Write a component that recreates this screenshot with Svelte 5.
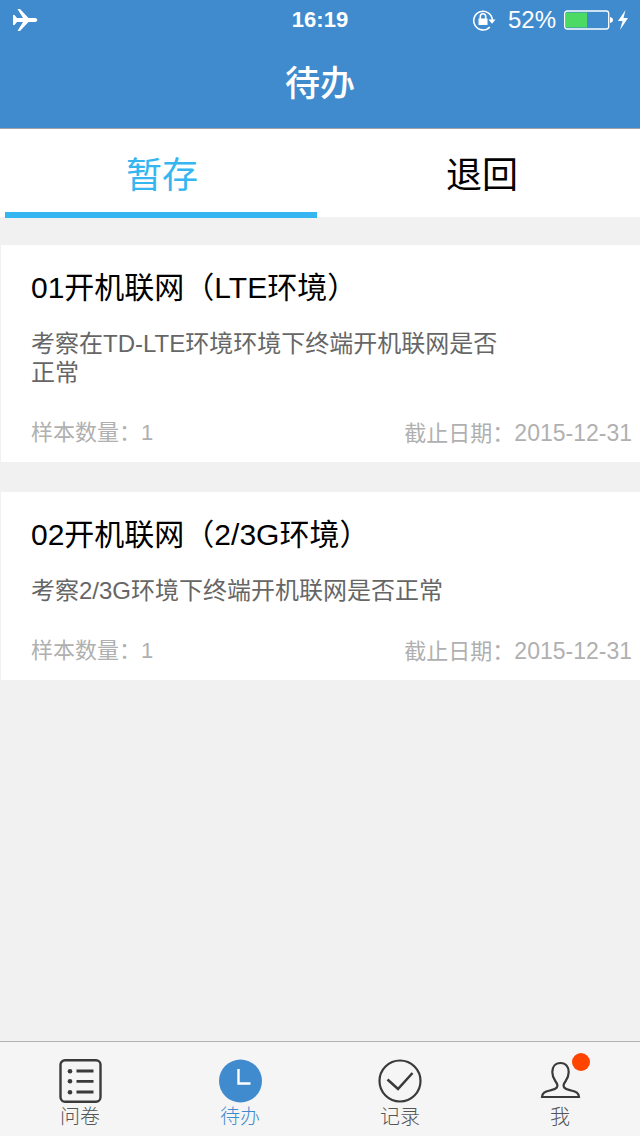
<!-- Todo.svelte -->
<script>
  let activeTab = $state('draft');
  let activePage = $state('todo');

  const tabs = [
    { id: 'draft', label: '暂存' },
    { id: 'returned', label: '退回' }
  ];

  const tasks = [
    {
      title: '01开机联网（LTE环境）',
      description: '考察在TD-LTE环境环境下终端开机联网是否正常',
      samples: 1,
      deadline: '2015-12-31'
    },
    {
      title: '02开机联网（2/3G环境）',
      description: '考察2/3G环境下终端开机联网是否正常',
      samples: 1,
      deadline: '2015-12-31'
    }
  ];

  const pages = [
    { id: 'survey', label: '问卷' },
    { id: 'todo', label: '待办' },
    { id: 'records', label: '记录' },
    { id: 'me', label: '我', badge: true }
  ];

  function openPage(event, id) {
    event.preventDefault();
    activePage = id;
  }
</script>

<div class="app">
  <header class="header">
    <div class="status">
      <div class="status-left">
        <svg width="26" height="24" viewBox="0 0 26 24" aria-hidden="true">
          <path fill="#fff" d="M1 7h1.500l2.500 3H11L5.500 1H8l8.500 9H23c1.500 0 2.300 1 2.300 2s-.8 2-2.300 2h-6.500L8 23H5.500L11 14H5l-2.500 3H1V7z" />
        </svg>
      </div>
      <time class="clock">16:19</time>
      <div class="status-right">
        <svg width="24" height="24" viewBox="0 0 24 24" aria-hidden="true">
          <path fill="none" stroke="#fff" stroke-width="1.600" d="M17.800 19A9.300 9.300 0 1 1 20.300 12" />
          <path fill="#fff" d="M16.500 11.500h7L20 15.800zM6.500 10.500h9V17h-9z" />
          <path fill="none" stroke="#fff" stroke-width="1.600" d="M8.300 11V8.500a2.700 2.700 0 0 1 5.400 0V11" />
        </svg>
        <span class="percent">52%</span>
        <svg width="50" height="20" viewBox="0 0 50 20" aria-hidden="true">
          <rect x="0.700" y="1" width="44" height="18" rx="2.500" fill="none" stroke="#fff" stroke-width="1.300" />
          <rect x="2" y="2.500" width="21" height="15" fill="#4cd964" />
          <path fill="#fff" d="M46 7c4 .5 4 5.500 0 6z" />
        </svg>
        <svg width="12" height="20" viewBox="0 0 12 20" aria-hidden="true">
          <path fill="#fff" d="M8.500 0 1 11h4.500L3 20l8-12H6.500z" />
        </svg>
      </div>
    </div>
    <h1 class="title">待办</h1>
  </header>

  <div class="tabs" role="tablist">
    {#each tabs as tab}
      <button
        class="tab {tab.id === activeTab ? 'active' : ''}"
        role="tab"
        aria-selected={tab.id === activeTab}
        onclick={() => (activeTab = tab.id)}
      >
        {tab.label}
      </button>
    {/each}
  </div>

  <main class="list">
    {#each tasks as task}
      <article class="card">
        <h2 class="card-title">{task.title}</h2>
        <p class="card-text">{task.description}</p>
        <div class="card-meta">
          <span>样本数量：{task.samples}</span>
          <span>截止日期：<time class="date">{task.deadline}</time></span>
        </div>
      </article>
    {/each}
  </main>

  <nav class="tabbar">
    {#each pages as page}
      <a
        class="tabbar-item {page.id === activePage ? 'active' : ''}"
        href="#{page.id}"
        onclick={(event) => openPage(event, page.id)}
      >
        <span class="icon">
          <svg width="44" height="44" viewBox="0 0 44 44" fill="none" stroke="#3a3a3a" stroke-width="2" aria-hidden="true">
            {#if page.id === 'survey'}
              <rect x="2.500" y="1.300" width="40" height="41.500" rx="4.500" stroke-width="2.400" />
              <path d="M18.500 12h17M18.500 22.300h17M18.500 33h17" stroke-width="2.800" />
              <g fill="#3a3a3a" stroke="none">
                <circle cx="12" cy="12.300" r="2.300" />
                <circle cx="12" cy="22.300" r="2.300" />
                <circle cx="12" cy="33.300" r="2.300" />
              </g>
            {:else if page.id === 'todo'}
              <circle cx="22.500" cy="22" r="21.500" fill="#3f8bce" stroke="none" />
              <path d="M20.500 10v14.500h12" stroke="#fff" stroke-width="2.400" />
            {:else if page.id === 'records'}
              <circle cx="22" cy="22" r="20.500" stroke-width="2.200" />
              <path d="M9.500 20.500 20 30 34.500 14" stroke-width="2.600" />
            {:else}
              <path
                d="M22.500 4c-5.500 0-8.200 4-8.200 9 0 4 1.200 6.500 3 9 1.500 2 3 4.500 1.500 6.500-1.500 2-4.300 2.300-7 3-5 1.200-7.500 2.300-7.800 6.500h37c-.3-4.200-2.800-5.300-7.800-6.500-2.700-.7-5.500-1-7-3-1.500-2 0-4.500 1.500-6.500 1.800-2.500 3-5 3-9 0-5-2.700-9-8.200-9z"
                stroke-width="2.200"
              />
            {/if}
          </svg>
          {#if page.badge}
            <span class="badge"></span>
          {/if}
        </span>
        <span class="label">{page.label}</span>
      </a>
    {/each}
  </nav>
</div>

<style>
  :global(body) {
    margin: 0;
    background: #f1f1f1;
  }

  .app {
    display: flex;
    flex-direction: column;
    min-height: 100vh;
    font-family: "Liberation Sans", "Noto Sans CJK SC", sans-serif;
    color: #000;
  }

  .header {
    background: #3f8bce;
    border-bottom: 1px solid #a0a4a8;
    color: #fff;
  }

  .status {
    display: grid;
    grid-template-columns: 1fr auto 1fr;
    align-items: center;
    height: 40px;
    padding: 0 12px;
  }

  .status svg {
    display: block;
  }

  .clock {
    font-size: 22px;
    font-weight: 700;
  }

  .status-right {
    display: flex;
    align-items: center;
    justify-content: flex-end;
    gap: 8px;
  }

  .status-right svg:last-child {
    margin: 0 -1px 0 -5px;
  }

  .percent {
    margin-left: 4px;
    font-size: 24px;
  }

  .title {
    margin: 0;
    font-size: 35px;
    font-weight: 500;
    line-height: 88px;
    text-align: center;
  }

  .tabs {
    display: flex;
    height: 88px;
    background: #fff;
  }

  .tab {
    position: relative;
    flex: 1;
    padding: 0 0 2px 4px;
    border: 0;
    background: none;
    color: #000;
    font: inherit;
    font-size: 36px;
    cursor: pointer;
  }

  .tab.active {
    color: #36b6f0;
  }

  .tab.active::after {
    content: "";
    position: absolute;
    right: 3px;
    bottom: -1px;
    left: 5px;
    height: 6px;
    background: #36b6f0;
  }

  .list {
    display: flex;
    flex: 1;
    flex-direction: column;
    gap: 30px;
    padding: 28px 0 30px 1px;
  }

  .card {
    padding: 23px 8px 15px 30px;
    background: #fff;
  }

  .card-title {
    margin: 0;
    font-size: 30px;
    font-weight: 400;
    line-height: 40px;
  }

  .card-text {
    max-width: 480px;
    margin: 21px 0 32px;
    color: #666;
    font-size: 24px;
    line-height: 29px;
  }

  .card-meta {
    display: flex;
    align-items: center;
    justify-content: space-between;
    height: 28px;
    color: #b0b0b0;
    font-size: 22px;
    line-height: 28px;
  }

  .date {
    font-size: 23px;
  }

  .tabbar {
    position: sticky;
    bottom: 0;
    display: flex;
    border-top: 1px solid #b2b2b2;
    background: #f5f5f5;
  }

  .tabbar-item {
    display: flex;
    flex: 1;
    flex-direction: column;
    align-items: center;
    gap: 2px;
    padding: 17px 0 7px;
    color: #555;
    font-weight: 300;
    text-decoration: none;
  }

  .tabbar-item.active {
    color: #3f8bce;
  }

  .icon {
    position: relative;
  }

  .icon svg {
    display: block;
  }

  .badge {
    position: absolute;
    top: -6px;
    right: -8px;
    width: 18px;
    height: 18px;
    border-radius: 50%;
    background: #ff4400;
  }

  .label {
    font-size: 20px;
    line-height: 24px;
  }
</style>
